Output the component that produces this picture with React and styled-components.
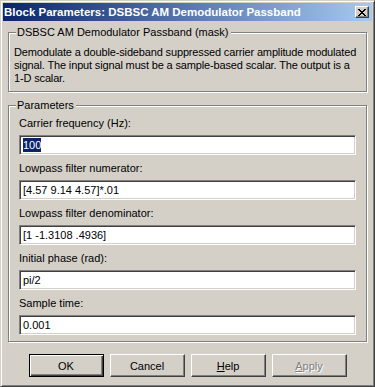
import React from "react";
import styled, { createGlobalStyle } from "styled-components";

const GlobalStyle = createGlobalStyle`
  html, body {
    margin: 0;
    padding: 0;
    background: #d4d0c8;
  }
  body {
    font-family: "Liberation Sans", Arial, sans-serif;
    font-size: 11px;
    color: #000;
  }
`;

const Window = styled.div`
  box-sizing: border-box;
  width: 375px;
  height: 387px;
  background: #d4d0c8;
  border: 1px solid;
  border-color: #d4d0c8 #404040 #404040 #d4d0c8;
  box-shadow: inset 1px 1px #fff, inset -1px -1px #808080;
  padding: 2px;
  display: flex;
  flex-direction: column;
`;

const TitleBar = styled.div`
  height: 18px;
  display: flex;
  align-items: center;
  justify-content: space-between;
  padding: 0 2px 0 1px;
  background: linear-gradient(to right, #0a246a, #a6caf0);
  color: #fff;
  font-weight: bold;
  font-size: 11.5px;
  white-space: nowrap;
`;

const CloseButton = styled.div`
  box-sizing: border-box;
  width: 14px;
  height: 12px;
  margin-right: 1px;
  background: #d4d0c8;
  border: 1px solid;
  border-color: #fff #404040 #404040 #fff;
  box-shadow: inset -1px -1px #808080;
  display: flex;
  align-items: center;
  justify-content: center;
`;

const Body = styled.div`
  flex: 1;
  display: flex;
  flex-direction: column;
  padding: 11px 4px 0 5px;
`;

const Group = styled.div`
  position: relative;
  border: 1px solid #808080;
  box-shadow: inset 1px 1px #fff, 1px 1px #fff;
  margin-right: 1px;
  padding: ${(p) => p.$pad};
  margin-bottom: ${(p) => p.$gap || 0}px;
`;

const Legend = styled.span`
  position: absolute;
  left: 7px;
  top: -7px;
  padding: 0 2px 0 1px;
  line-height: 13px;
  background: #d4d0c8;
`;

const Description = styled.p`
  margin: 0;
  line-height: 13px;
  white-space: nowrap;
  letter-spacing: -0.15px;
`;

const Row = styled.div`
  display: flex;
  flex-direction: column;
  gap: 5px;
  margin-top: ${(p) => (p.$first ? 0 : 7)}px;
`;

const Label = styled.div`
  line-height: 13px;
`;

const Field = styled.div`
  box-sizing: border-box;
  height: 20px;
  background: #fff;
  border: 1px solid;
  border-color: #808080 #fff #fff #808080;
  box-shadow: inset 1px 1px #404040, inset -1px -1px #d4d0c8;
  padding: 0 3px;
  display: flex;
  align-items: center;
  white-space: nowrap;
`;

const Selected = styled.span`
  background: #0a246a;
  color: #fff;
  line-height: 14px;
`;

const ButtonRow = styled.div`
  display: flex;
  justify-content: center;
  gap: 6px;
  margin-top: 12px;
  padding-right: 1px;
`;

const Button = styled.div`
  box-sizing: border-box;
  width: 75px;
  height: 23px;
  display: flex;
  align-items: center;
  justify-content: center;
  border: 1px solid;
  border-color: ${(p) => (p.$default ? "#000" : "#fff #404040 #404040 #fff")};
  box-shadow: ${(p) =>
    p.$default
      ? "inset 1px 1px #fff, inset -1px -1px #404040, inset -2px -2px #808080"
      : "inset -1px -1px #808080"};
  color: ${(p) => (p.$disabled ? "#808080" : "#000")};
  text-shadow: ${(p) => (p.$disabled ? "1px 1px #fff" : "none")};

  u {
    text-decoration: underline;
  }
`;

const params = [
  { label: "Carrier frequency (Hz):", value: "100", selected: true },
  { label: "Lowpass filter numerator:", value: "[4.57 9.14 4.57]*.01" },
  { label: "Lowpass filter denominator:", value: "[1 -1.3108 .4936]" },
  { label: "Initial phase (rad):", value: "pi/2" },
  { label: "Sample time:", value: "0.001" },
];

export default function App() {
  return (
    <>
      <GlobalStyle />
      <Window>
        <TitleBar>
          <span>Block Parameters: DSBSC AM Demodulator Passband</span>
          <CloseButton>
            <svg width="8" height="7" viewBox="0 0 8 7">
              <path
                d="M0 0h2v1h1v1h2v-1h1v-1h2v1h-1v1h-1v1h-1v1h1v1h1v1h1v1h-2v-1h-1v-1h-2v1h-1v1h-2v-1h1v-1h1v-1h1v-1h-1v-1h-1v-1h-1z"
                fill="#000"
              />
            </svg>
          </CloseButton>
        </TitleBar>
        <Body>
          <Group $pad="13px 5px 6px 5px" $gap={13}>
            <Legend>DSBSC AM Demodulator Passband (mask)</Legend>
            <Description>
              Demodulate a double-sideband suppressed carrier amplitude modulated
              <br />
              signal. The input signal must be a sample-based scalar. The output is a
              <br />
              1-D scalar.
            </Description>
          </Group>
          <Group $pad="11px 10px 6px 10px">
            <Legend>Parameters</Legend>
            {params.map((p, i) => (
              <Row key={p.label} $first={i === 0}>
                <Label>{p.label}</Label>
                <Field>
                  {p.selected ? <Selected>{p.value}</Selected> : p.value}
                </Field>
              </Row>
            ))}
          </Group>
          <ButtonRow>
            <Button $default>OK</Button>
            <Button>Cancel</Button>
            <Button>
              <span>
                <u>H</u>elp
              </span>
            </Button>
            <Button $disabled>
              <span>
                <u>A</u>pply
              </span>
            </Button>
          </ButtonRow>
        </Body>
      </Window>
    </>
  );
}
